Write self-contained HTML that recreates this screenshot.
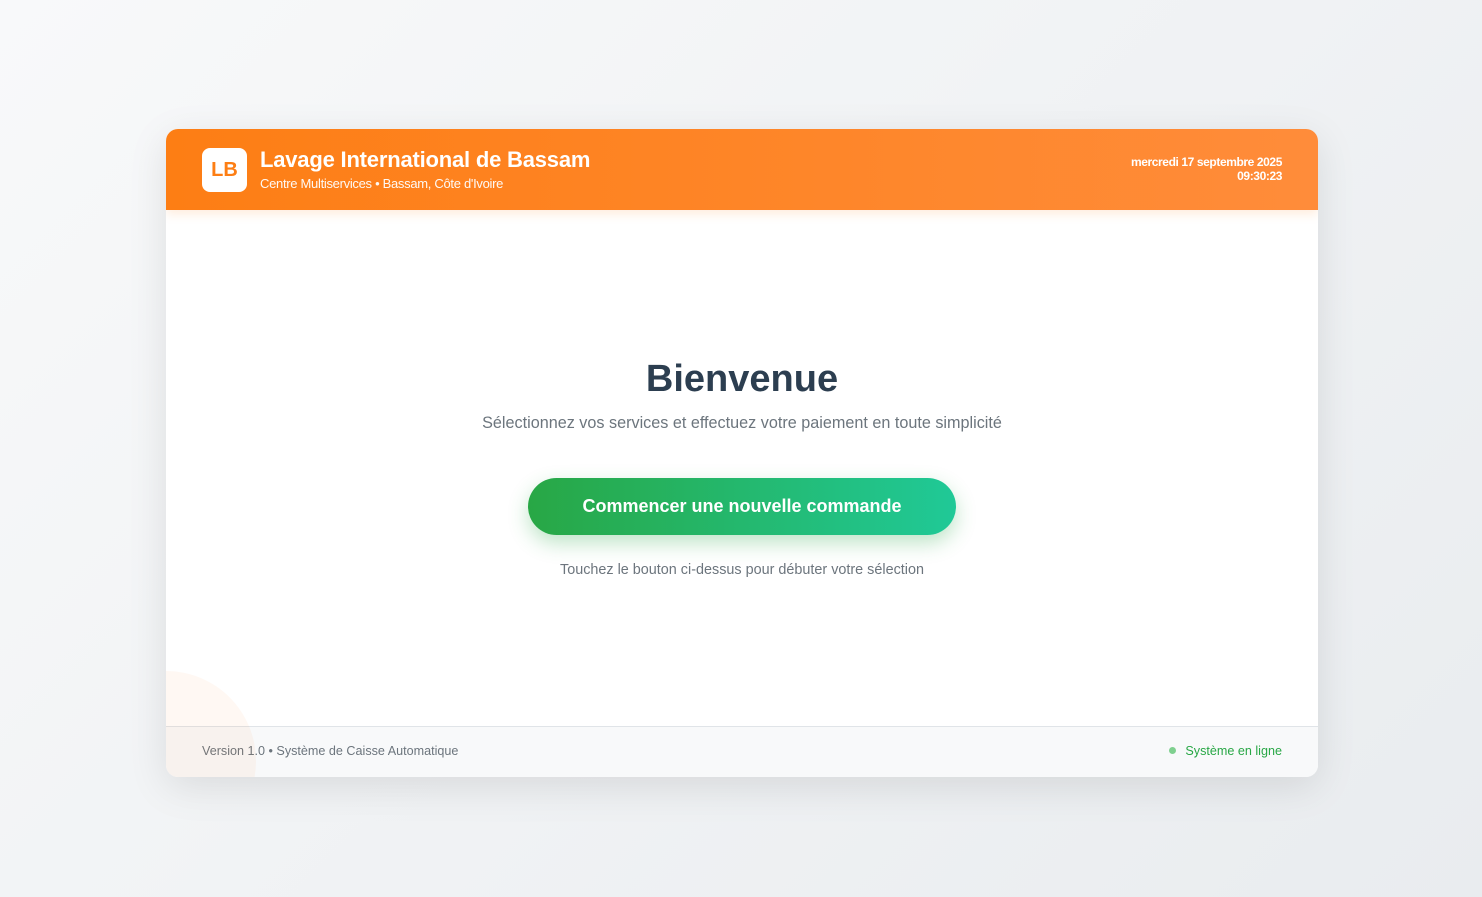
<!DOCTYPE html>
<html><head><meta charset="utf-8"><style>
*{margin:0;padding:0;box-sizing:border-box}
body{width:1482px;height:897px;background:linear-gradient(135deg,#f8f9fa,#e9ecef);font-family:"Liberation Sans",sans-serif;position:relative;overflow:hidden}
.card{position:absolute;left:166px;top:129px;width:1152px;height:648px;background:#fff;border-radius:12px;overflow:hidden;box-shadow:0 10px 40px rgba(0,0,0,.1)}
.hdr{height:81px;background:linear-gradient(90deg,#fd7e14,#ff8c3a);position:relative;box-shadow:0 4px 10px rgba(253,126,20,.15)}
.logo{position:absolute;left:36px;top:19px;width:45px;height:44px;background:#fff;border-radius:8px;color:#fd7e14;font-weight:bold;font-size:20px;text-align:center;line-height:44px}
.t1{position:absolute;left:94px;top:18px;color:#fff;font-weight:bold;font-size:22px;letter-spacing:-.2px}
.t2{position:absolute;left:94px;top:47px;color:#fff;font-size:13px;letter-spacing:-.3px;opacity:.95}
.dt{position:absolute;right:36px;top:26px;color:#fff;font-size:12px;font-weight:bold;text-align:right;line-height:14px;letter-spacing:-.4px}
h1{position:absolute;left:0;right:0;top:229px;text-align:center;font-size:38px;color:#2c3e50;font-weight:bold}
.sub{position:absolute;left:0;right:0;top:285px;text-align:center;font-size:16.2px;color:#6c757d}
.btn{position:absolute;left:362px;top:349px;width:428px;height:57px;border-radius:29px;background:linear-gradient(90deg,#28a745,#20c997);color:#fff;font-weight:bold;font-size:18px;text-align:center;line-height:57px;box-shadow:0 8px 20px rgba(40,167,69,.3)}
.hint{position:absolute;left:0;right:0;top:433px;text-align:center;font-size:14.4px;color:#6c757d}
.ftr{position:absolute;left:0;right:0;bottom:0;height:51px;background:#f8f9fa;border-top:1px solid #e0e4e8}
.circ{position:absolute;left:-90px;top:542px;width:180px;height:180px;border-radius:50%;background:rgba(253,126,20,.05)}
.v{position:absolute;left:36px;top:17px;font-size:12.6px;color:#6c757d}
.on{position:absolute;right:36px;top:17px;font-size:12.6px;color:#28a745}
.on:before{content:"";display:inline-block;width:7px;height:7px;border-radius:50%;background:#7fd08f;margin-right:9px;vertical-align:1px}
</style></head><body>
<div class="card">
<div class="hdr"><div class="logo">LB</div><div class="t1">Lavage International de Bassam</div><div class="t2">Centre Multiservices • Bassam, Côte d'Ivoire</div><div class="dt">mercredi 17 septembre 2025<br>09:30:23</div></div>
<h1>Bienvenue</h1>
<div class="sub">Sélectionnez vos services et effectuez votre paiement en toute simplicité</div>
<div class="btn">Commencer une nouvelle commande</div>
<div class="hint">Touchez le bouton ci-dessus pour débuter votre sélection</div>
<div class="ftr"><div class="v">Version 1.0 • Système de Caisse Automatique</div><div class="on">Système en ligne</div></div>
<div class="circ"></div>
</div>
</body></html>
